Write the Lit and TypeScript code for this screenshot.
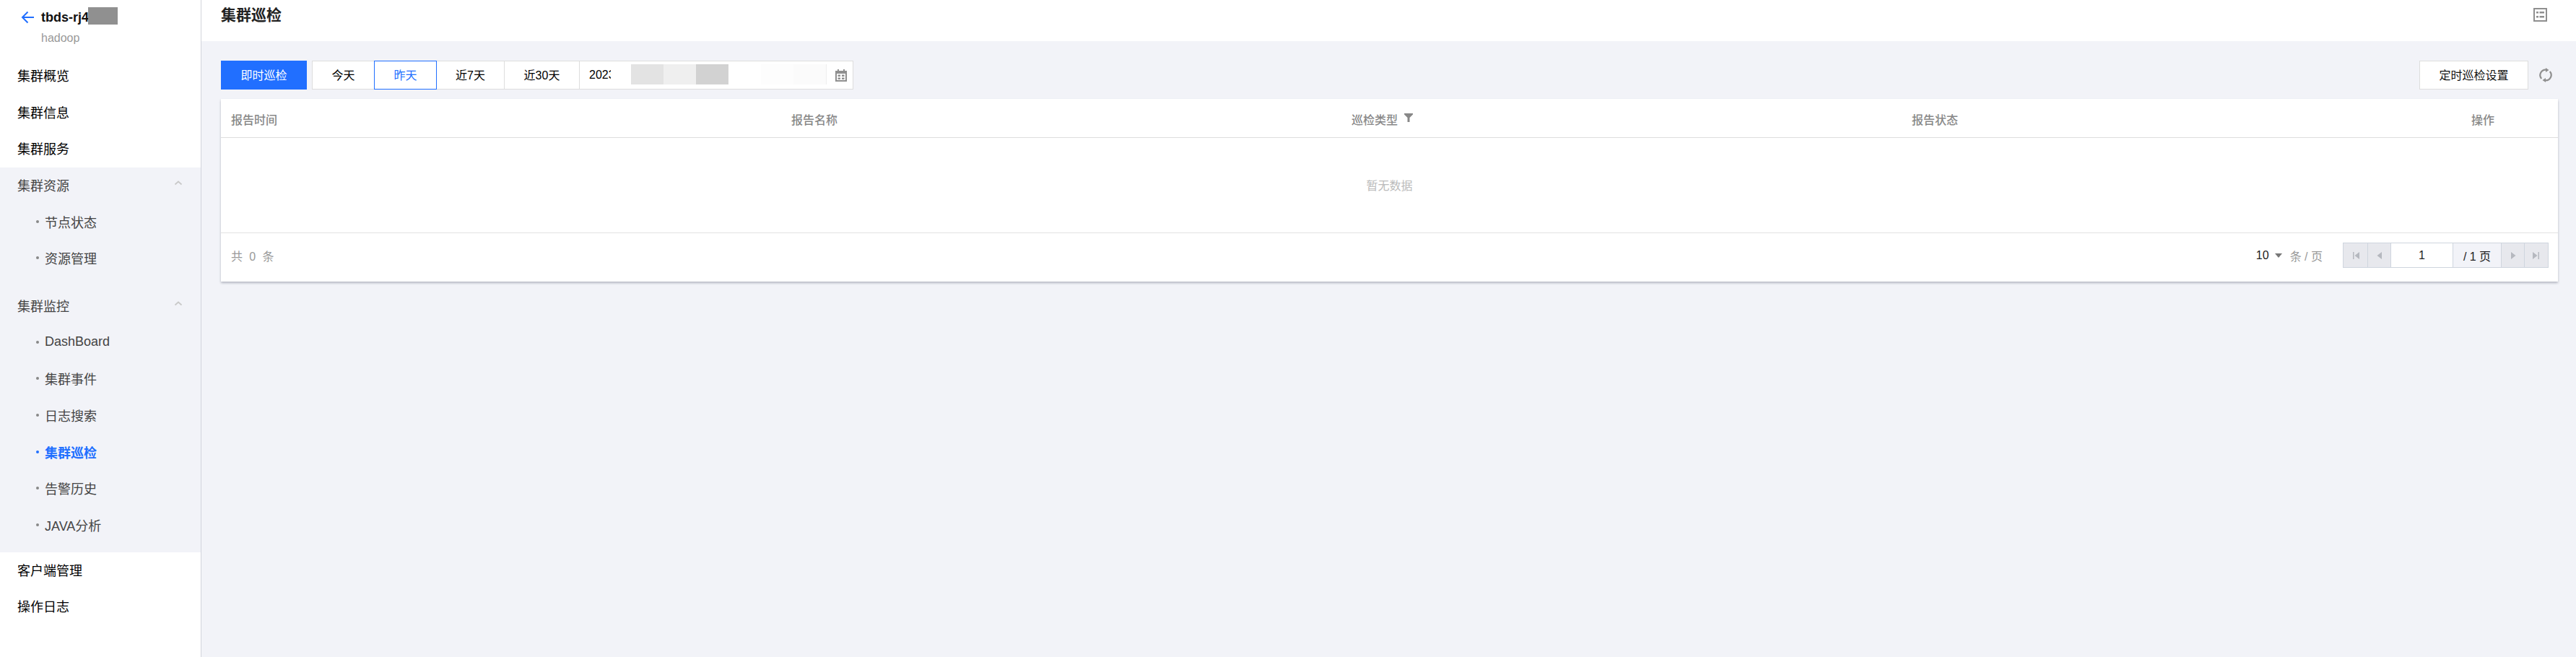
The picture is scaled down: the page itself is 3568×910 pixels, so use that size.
import { LitElement, html, css, svg } from "lit";
import { customElement } from "lit/decorators.js";

const chevron = html`<svg class="chev" width="12" height="7" viewBox="0 0 12 7"><path d="M1.500 5.500 6 1.500l4.500 4" fill="none" stroke="#c9c9c9" stroke-width="1.8"/></svg>`;
const pg = (d: string) => html`<svg width="16" height="16" viewBox="0 0 16 16">${svg`<path d=${d} fill="#b5b8bf"/>`}</svg>`;

@customElement("app-root")
export class AppRoot extends LitElement {
  static styles = css`
    :host { display: block; width: 3568px; height: 910px; overflow: hidden; background: #f2f3f8; color: #000;
      font-family: "Liberation Sans", "Noto Sans CJK SC", sans-serif; font-size: 16px; }
    .page { display: flex; height: 910px; }
    .side { width: 278px; flex: none; background: #fff; border-right: 1px solid #d2d4dc; box-sizing: content-box; }
    .brand { height: 80px; box-sizing: border-box; padding: 10px 0 0 29px; position: relative; }
    .brand-top { display: flex; align-items: center; height: 28px; gap: 9px; }
    .brand-name { font-size: 18px; font-weight: 700; color: #111; }
    .mask { position: absolute; left: 122px; top: 10px; width: 41px; height: 24px; background: #909090; }
    .brand-sub { margin: 4px 0 0 28px; color: #999; font-size: 16px; line-height: 22px; }
    .item { height: 50.7px; box-sizing: border-box; padding-bottom: 3px; display: flex; align-items: center; padding-left: 24px; font-size: 18px; position: relative; }
    .group { background: #f2f3f8; padding-bottom: 11px; }
    .group .item.head { color: #444; }
    .chev { position: absolute; left: 241px; top: 18px; }
    .item.sub { color: #444; padding-left: 62px; font-size: 18px; }
    .sub::before { content: ""; position: absolute; left: 50px; top: calc(50% - 1.500px); margin-top: -2px; width: 4px; height: 4px; border-radius: 50%; background: #888; }
    .item.sub.on { color: #216fff; font-weight: 700; }
    .sub.on::before { background: #216fff; }
    .gap { height: 15px; }
    .main { flex: 1; min-width: 0; }
    .topbar { height: 57px; background: #fff; display: flex; align-items: center; justify-content: space-between; padding: 0 40px 16px 27px; box-sizing: border-box; }
    .title { font-size: 21px; font-weight: 700; color: #222; margin-bottom: 3px; }
    .content { padding: 27px 25px 0 27px; }
    .tools { display: flex; align-items: stretch; height: 40px; margin-bottom: 13px; }
    .primary { width: 119px; background: #216fff; color: #fff; display: flex; align-items: center; justify-content: center; font-size: 16px; margin-right: 7px; padding-bottom: 2px; box-sizing: border-box; }
    .seg { display: flex; }
    .seg > div { box-sizing: border-box; background: #fff; border: 1px solid #ddd; margin-left: -1px; display: flex; align-items: center; justify-content: center; font-size: 16px; padding-bottom: 2px; }
    .seg > div:first-child { margin-left: 0; }
    .seg .active { border-color: #216fff; color: #216fff; position: relative; z-index: 1; }
    .seg .date { width: 380px; padding: 0 0 0 13px; justify-content: flex-start; position: relative; }
    .year { white-space: nowrap; font-size: 16px; }
    .blocks { position: absolute; left: 43px; top: 4px; height: 28px; display: flex; }
    .blocks i { display: block; height: 28px; width: 45px; }
    .blocks .first { width: 28px; background: #fff; }
    .blocks .edge { width: 1px; background: #eee; }
    .cal { position: absolute; left: 354px; top: 11px; }
    .spacer { flex: 1; }
    .btn { width: 151px; box-sizing: border-box; background: #fff; border: 1px solid #ddd; display: flex; align-items: center; justify-content: center; font-size: 16px; color: #111; padding-bottom: 2px; }
    .refresh { width: 41px; display: flex; align-items: center; padding-left: 15px; box-sizing: border-box; }
    .table { background: #fff; box-shadow: 0 2px 3px rgba(54, 58, 80, .32); }
    .thead { height: 54px; box-sizing: border-box; padding-top: 2px; border-bottom: 1px solid #ddd; display: grid; grid-template-columns: 776px 776px 776px 776px 1fr; align-items: center; color: #888; font-weight: 500; font-size: 16px; }
    .thead > div { padding-left: 14px; display: flex; align-items: center; white-space: nowrap; }
    .thead > div:last-child { padding-left: 0; justify-content: flex-end; padding-right: 88px; }
    .filter { margin: -3px 0 0 9px; }
    .empty { height: 132px; box-sizing: border-box; border-bottom: 1px solid #e2e2e2; display: flex; align-items: center; justify-content: center; color: #bbb; padding-bottom: 2px; }
    .foot { height: 67px; box-sizing: border-box; display: flex; align-items: center; justify-content: space-between; padding: 0 13px 6px 14px; color: #999; }
    .total { word-spacing: 4px; letter-spacing: .4px; }
    .pager { display: flex; align-items: center; }
    .size { color: #222; margin-right: 8px; }
    .caret { width: 0; height: 0; border: 5.500px solid transparent; border-top: 6px solid #777; border-bottom: 0; margin-right: 11px; }
    .per { margin-right: 28px; }
    .pages { display: flex; height: 35px; box-sizing: border-box; border: 1px solid #cfd5de; }
    .pages > div { display: flex; align-items: center; justify-content: center; border-left: 1px solid #cfd5de; box-sizing: border-box; }
    .pages > div:first-child { border-left: 0; }
    .pb { width: 32px; background: #e7e8ed; }
    .num { width: 86px; background: #fff; color: #222; }
    .tot { width: 67px; background: #f2f3f8; color: #222; }
  `;

  render() {
    return html`<div class="page">
      <aside class="side">
        <div class="brand">
          <div class="brand-top">
            <svg width="19" height="18" viewBox="0 0 19 18"><path d="M18 9H2M9.500 1.500 2 9l7.500 7.500" fill="none" stroke="#216fff" stroke-width="2"/></svg>
            <span class="brand-name">tbds-rj4</span>
          </div>
          <div class="mask"></div>
          <div class="brand-sub">hadoop</div>
        </div>
        <div class="item">集群概览</div>
        <div class="item">集群信息</div>
        <div class="item">集群服务</div>
        <div class="group">
          <div class="item head">集群资源${chevron}</div>
          <div class="item sub">节点状态</div>
          <div class="item sub">资源管理</div>
          <div class="gap"></div>
          <div class="item head">集群监控${chevron}</div>
          <div class="item sub">DashBoard</div>
          <div class="item sub">集群事件</div>
          <div class="item sub">日志搜索</div>
          <div class="item sub on">集群巡检</div>
          <div class="item sub">告警历史</div>
          <div class="item sub">JAVA分析</div>
        </div>
        <div class="item">客户端管理</div>
        <div class="item">操作日志</div>
      </aside>
      <main class="main">
        <div class="topbar">
          <div class="title">集群巡检</div>
          <svg width="19" height="19" viewBox="0 0 19 19"><path fill-rule="evenodd" fill="#8f8f8f" d="M0 0h19v19H0zM2 2v15h15V2zM4 5h3v2.500H4zM8.500 5H15v2.500H8.500zM4 11h3v2.500H4zM8.500 11H15v2.500H8.500z"/></svg>
        </div>
        <div class="content">
          <div class="tools">
            <div class="primary">即时巡检</div>
            <div class="seg">
              <div style="width:87px">今天</div>
              <div class="active" style="width:87px">昨天</div>
              <div style="width:95px">近7天</div>
              <div style="width:105px">近30天</div>
              <div class="date">
                <span class="year">2023</span>
                <div class="blocks">
                  <i class="first"></i><i style="background:#e3e3e3"></i><i style="background:#efefef"></i><i style="background:#d2d2d2"></i><i style="background:#fff"></i><i style="background:#fdfdfd"></i><i style="background:#fbfbfb"></i><i class="edge"></i>
                </div>
                <svg class="cal" width="16" height="17" viewBox="0 0 16 17"><path fill-rule="evenodd" fill="#8f8f8f" d="M3 0h2v2h6V0h2v2h3v15H0V2h3zM2 6v9h12V6zM3.500 7.500h3.500v2.500H3.500zM9 7.500h3.500v2.500H9zM3.500 11.500h3.500v2.500H3.500zM9 11.500h3.500v2.500H9z"/></svg>
              </div>
            </div>
            <div class="spacer"></div>
            <div class="btn">定时巡检设置</div>
            <div class="refresh">
              <svg width="18" height="20" viewBox="0 0 18 20"><g fill="none" stroke="#8f8f8f" stroke-width="2.200"><path d="M3.200 15A7.500 7.500 0 0 1 9.500 2.600"/><path d="M14.800 5A7.500 7.500 0 0 1 8.500 17.400"/></g><path fill="#8f8f8f" d="M9 0l4.500 3-4.500 3zM9 20l-4.500-3 4.500-3z"/></svg>
            </div>
          </div>
          <div class="table">
            <div class="thead">
              <div>报告时间</div>
              <div>报告名称</div>
              <div>巡检类型<svg class="filter" width="12" height="12" viewBox="0 0 12 12"><path fill="#888" d="M0 0h12v1.500L7.500 6v6h-3V6L0 1.500z"/></svg></div>
              <div>报告状态</div>
              <div>操作</div>
            </div>
            <div class="empty">暂无数据</div>
            <div class="foot">
              <div class="total">共 0 条</div>
              <div class="pager">
                <span class="size">10</span><span class="caret"></span><span class="per">条 / 页</span>
                <div class="pages">
                  <div class="pb" style="width:33px">${pg("M4 3h1.500v10H4zM13 3v10L6.500 8z")}</div>
                  <div class="pb">${pg("M11 3v10L4.500 8z")}</div>
                  <div class="num">1</div>
                  <div class="tot">/ 1 页</div>
                  <div class="pb">${pg("M5 3v10l6.500-5z")}</div>
                  <div class="pb" style="width:33px">${pg("M12 3h-1.500v10H12zM3 3v10l6.500-5z")}</div>
                </div>
              </div>
            </div>
          </div>
        </div>
      </main>
    </div>`;
  }
}
